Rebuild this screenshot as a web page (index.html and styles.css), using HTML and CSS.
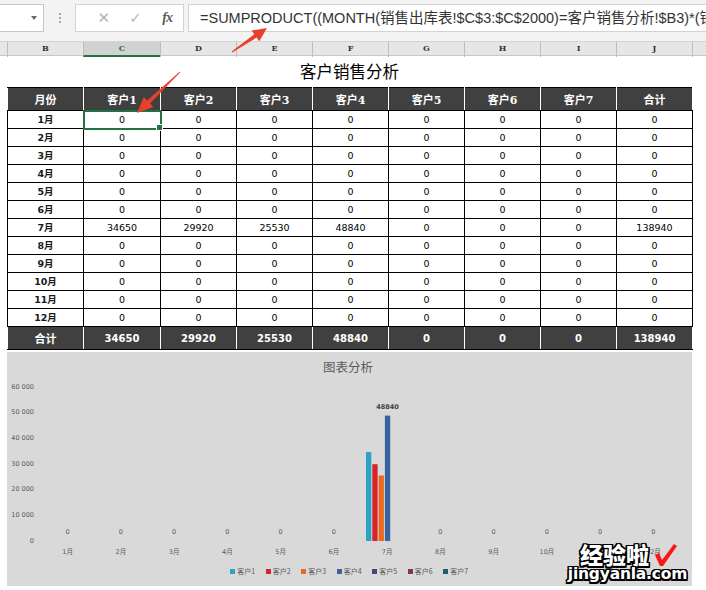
FILE: index.html
```html
<!DOCTYPE html>
<html lang="zh-CN">
<head>
<meta charset="utf-8">
<title>客户销售分析</title>
<link rel="stylesheet" href="styles.css">
</head>
<body>
<div class="toolbar">
  <div class="namebox"><span class="dd"></span></div>
  <div class="grip"><i></i><i></i><i></i></div>
  <div class="fbtns"><span class="btn x">✕</span><span class="btn ok">✓</span><span class="btn fx">fx</span></div>
  <div class="formula">=SUMPRODUCT((MONTH(销售出库表!$C$3:$C$2000)=客户销售分析!$B3)*(销售出库表!$D$3:$D$2000=C$2)*销售出库表!$F$3:$F$2000)</div>
</div>
<div class="colheads">
  <div class="corner"></div>
  <div class="ch">B</div>
  <div class="ch sel">C</div>
  <div class="ch">D</div>
  <div class="ch">E</div>
  <div class="ch">F</div>
  <div class="ch">G</div>
  <div class="ch">H</div>
  <div class="ch">I</div>
  <div class="ch">J</div>
  <div class="ch"></div>
</div>
<div class="sheet">
  <div class="title">客户销售分析</div>
  <table class="data">
    <colgroup>
      <col class="c1"><col class="c2"><col class="cn"><col class="cn"><col class="cn"><col class="cn"><col class="cn"><col class="cn"><col class="cn">
    </colgroup>
    <thead>
      <tr class="hd"><th>月份</th><th>客户1</th><th>客户2</th><th>客户3</th><th>客户4</th><th>客户5</th><th>客户6</th><th>客户7</th><th>合计</th></tr>
    </thead>
    <tbody>
      <tr><td class="m">1月</td><td class="active">0</td><td>0</td><td>0</td><td>0</td><td>0</td><td>0</td><td>0</td><td>0</td></tr>
      <tr><td class="m">2月</td><td>0</td><td>0</td><td>0</td><td>0</td><td>0</td><td>0</td><td>0</td><td>0</td></tr>
      <tr><td class="m">3月</td><td>0</td><td>0</td><td>0</td><td>0</td><td>0</td><td>0</td><td>0</td><td>0</td></tr>
      <tr><td class="m">4月</td><td>0</td><td>0</td><td>0</td><td>0</td><td>0</td><td>0</td><td>0</td><td>0</td></tr>
      <tr><td class="m">5月</td><td>0</td><td>0</td><td>0</td><td>0</td><td>0</td><td>0</td><td>0</td><td>0</td></tr>
      <tr><td class="m">6月</td><td>0</td><td>0</td><td>0</td><td>0</td><td>0</td><td>0</td><td>0</td><td>0</td></tr>
      <tr><td class="m">7月</td><td>34650</td><td>29920</td><td>25530</td><td>48840</td><td>0</td><td>0</td><td>0</td><td>138940</td></tr>
      <tr><td class="m">8月</td><td>0</td><td>0</td><td>0</td><td>0</td><td>0</td><td>0</td><td>0</td><td>0</td></tr>
      <tr><td class="m">9月</td><td>0</td><td>0</td><td>0</td><td>0</td><td>0</td><td>0</td><td>0</td><td>0</td></tr>
      <tr><td class="m">10月</td><td>0</td><td>0</td><td>0</td><td>0</td><td>0</td><td>0</td><td>0</td><td>0</td></tr>
      <tr><td class="m">11月</td><td>0</td><td>0</td><td>0</td><td>0</td><td>0</td><td>0</td><td>0</td><td>0</td></tr>
      <tr><td class="m">12月</td><td>0</td><td>0</td><td>0</td><td>0</td><td>0</td><td>0</td><td>0</td><td>0</td></tr>
    </tbody>
    <tfoot>
      <tr class="tot"><th>合计</th><th>34650</th><th>29920</th><th>25530</th><th>48840</th><th>0</th><th>0</th><th>0</th><th>138940</th></tr>
    </tfoot>
  </table>
  <div class="chart">
    <div class="ctitle">图表分析</div>
    <svg class="plot" width="685" height="180" viewBox="0 0 685 180">
      <g class="ylab">
        <text x="27" y="5">60 000</text>
        <text x="27" y="30.7">50 000</text>
        <text x="27" y="56.3">40 000</text>
        <text x="27" y="82">30 000</text>
        <text x="27" y="107.7">20 000</text>
        <text x="27" y="133.3">10 000</text>
        <text x="27" y="159">0</text>
      </g>
      <g class="dlab">
        <text x="60.6" y="150.7">0</text>
        <text x="113.9" y="150.7">0</text>
        <text x="167.1" y="150.7">0</text>
        <text x="220.4" y="150.7">0</text>
        <text x="273.6" y="150.7">0</text>
        <text x="326.9" y="150.7">0</text>
        <text x="433.4" y="150.7">0</text>
        <text x="486.6" y="150.7">0</text>
        <text x="539.9" y="150.7">0</text>
        <text x="593.1" y="150.7">0</text>
        <text x="646.4" y="150.7">0</text>
        <text class="big" x="380.5" y="25">48840</text>
      </g>
      <g class="xlab">
        <text x="60.6" y="170">1月</text>
        <text x="113.9" y="170">2月</text>
        <text x="167.1" y="170">3月</text>
        <text x="220.4" y="170">4月</text>
        <text x="273.6" y="170">5月</text>
        <text x="326.9" y="170">6月</text>
        <text x="380.1" y="170">7月</text>
        <text x="433.4" y="170">8月</text>
        <text x="486.6" y="170">9月</text>
        <text x="539.9" y="170">10月</text>
        <text x="593.1" y="170">11月</text>
        <text x="646.4" y="170">12月</text>
      </g>
      <rect class="s1" x="359" y="70.1" width="5.3" height="88.9"/>
      <rect class="s2" x="365.3" y="82.2" width="5.3" height="76.8"/>
      <rect class="s3" x="371.6" y="93.5" width="5.3" height="65.5"/>
      <rect class="s4" x="377.9" y="33.6" width="5.3" height="125.4"/>
    </svg>
    <div class="legend">
      <span class="li"><i class="sw s1"></i>客户1</span>
      <span class="li"><i class="sw s2"></i>客户2</span>
      <span class="li"><i class="sw s3"></i>客户3</span>
      <span class="li"><i class="sw s4"></i>客户4</span>
      <span class="li"><i class="sw s5"></i>客户5</span>
      <span class="li"><i class="sw s6"></i>客户6</span>
      <span class="li"><i class="sw s7"></i>客户7</span>
    </div>
    <div class="watermark">
      <div class="wm1">经验啦<svg class="check" width="26" height="25" viewBox="0 0 26 25"><path d="M3 13 L7 11 L10 18 L22 2 L25 4 L11 24 L8 24 Z"/></svg></div>
      <div class="wm2">jingyanla.com</div>
    </div>
  </div>
</div>
<svg class="arrows" width="706" height="590" viewBox="0 0 706 590">
  <polygon points="231.7,51.6 254.3,34.25 251.6,30.6 267,28 259.3,41.2 256.6,37.55 232.3,52.4"/>
  <polygon points="179.65,71.64 147.2,100.51 143.8,96.9 137,113 153.4,107 149.96,103.41 180.35,72.36"/>
</svg>
</body>
</html>
```
FILE: styles.css
```css
* { box-sizing: border-box; }
html, body { margin: 0; padding: 0; }
body {
  width: 706px;
  height: 590px;
  overflow: hidden;
  background: #ffffff;
  font-family: "Noto Sans CJK SC", "Liberation Sans", sans-serif;
  position: relative;
}

/* formula bar */
.toolbar {
  height: 41px;
  background: #f3f3f3;
  display: flex;
  align-items: flex-start;
  padding-top: 4px;
}
.namebox {
  width: 45px;
  height: 28px;
  margin-left: -1px;
  background: #fff;
  border: 1px solid #c6c6c6;
  position: relative;
  display: flex;
  align-items: center;
  justify-content: flex-end;
  padding-right: 6px;
}
.dd {
  width: 0; height: 0;
  border-left: 3.5px solid transparent;
  border-right: 3.5px solid transparent;
  border-top: 4px solid #6b6b6b;
}
.grip {
  width: 31px;
  height: 28px;
  display: flex;
  flex-direction: column;
  align-items: center;
  justify-content: center;
  gap: 2px;
}
.grip i { display: block; width: 2px; height: 2px; background: #a8a8a8; }
.fbtns {
  width: 109px;
  height: 28px;
  background: #fff;
  border: 1px solid #d2d2d2;
  display: flex;
  align-items: center;
  padding-left: 12px;
}
.btn { width: 35px; text-align: center; color: #b4b4b4; }
.btn.x { font-size: 15px; font-family: "DejaVu Sans", sans-serif; }
.btn.ok { font-size: 15px; font-family: "DejaVu Sans", sans-serif; color: #b8b8b8; }
.btn.fx { font-family: "Liberation Serif", serif; font-style: italic; font-weight: bold; font-size: 14px; color: #5a5a5a; letter-spacing: -1px; }
.formula {
  margin-left: 4px;
  flex: 1;
  min-width: 0;
  height: 28px;
  background: #fff;
  border: 1px solid #d2d2d2;
  border-right: none;
  white-space: nowrap;
  overflow: hidden;
  padding-left: 11px;
  font-family: "Liberation Sans", "Noto Sans CJK SC", sans-serif;
  font-size: 14.5px;
  line-height: 26px;
  color: #333;
}

/* column headers */
.colheads {
  display: grid;
  grid-template-columns: 7px 76px 77px 76px 76px 76px 76px 76px 76px 76px 1fr;
  height: 15px;
  background: #e6e6e6;
  border-top: 1px solid #d4d4d4;
  border-bottom: 1px solid #c8c8c8;
}
.ch {
  border-left: 1px solid #bdbdbd;
  font-family: "DejaVu Serif", serif;
  font-size: 8px;
  font-weight: bold;
  color: #333;
  text-align: center;
  line-height: 13px;
}
.ch.sel {
  background: #d2d2d2;
  border-bottom: 2px solid #217346;
  color: #217346;
}

/* sheet */
.sheet { padding-left: 7px; }
.title {
  width: 685px;
  height: 31px;
  display: flex;
  align-items: center;
  justify-content: center;
  font-size: 16.5px;
  color: #000;
  padding-bottom: 1px;
}
table.data {
  border-collapse: collapse;
  table-layout: fixed;
  width: 686px;
  border: 1px solid #000;
}
col.c1 { width: 76px; }
col.c2 { width: 77px; }
col.cn { width: 76px; }
table.data th, table.data td {
  padding: 0;
  text-align: center;
  white-space: nowrap;
  overflow: visible;
}
tr.hd { height: 23px; }
tr.hd th {
  background: #404040;
  color: #fff;
  font-weight: bold;
  font-size: 11px;
  border-left: 1px solid #fff;
  border-right: 1px solid #fff;
  border-top: 1px solid #000;
  border-bottom: 1px solid #000;
  font-family: "DejaVu Serif", "Noto Sans CJK SC", serif;
}
tbody tr { height: 18px; }
tbody td {
  border: 1px solid #000;
  font-family: "DejaVu Sans", "Noto Sans CJK SC", sans-serif;
  font-size: 9.5px;
  color: #000;
  line-height: 16px;
}
tbody td.m { font-weight: bold; font-size: 9.5px; color: #1a1a1a; }
td.active {
  position: relative;
  outline: 2px solid #217346;
  outline-offset: -1px;
}
td.active::after {
  content: "";
  position: absolute;
  right: -3px;
  bottom: -3px;
  width: 5px;
  height: 5px;
  background: #217346;
  border: 1px solid #fff;
}
tr.tot { height: 23px; }
tr.tot th {
  background: #404040;
  color: #fff;
  font-family: "DejaVu Sans", "Noto Sans CJK SC", sans-serif;
  font-weight: bold;
  font-size: 10px;
  border-left: 1px solid #fff;
  border-right: 1px solid #fff;
  border-top: 1px solid #000;
  border-bottom: 1px solid #000;
}
tr.tot th:first-child { font-size: 11px; }

/* chart */
.chart {
  margin-top: 2px;
  width: 685px;
  height: 234px;
  background: #d9d9d9;
  position: relative;
}
.ctitle {
  height: 30px;
  line-height: 30px;
  text-align: center;
  font-size: 12.5px;
  color: #595959;
  padding-right: 3px;
}
.plot { display: block; }
.plot text {
  font-family: "DejaVu Sans", "Noto Sans CJK SC", sans-serif;
  font-size: 6.5px;
  fill: #595959;
  dominant-baseline: middle;
}
.ylab text { text-anchor: end; }
.dlab text, .xlab text { text-anchor: middle; }
.dlab text.big { font-weight: bold; fill: #404040; }
.s1 { fill: #2ca3c4; background: #2ca3c4; }
.s2 { fill: #d9232b; background: #d9232b; }
.s3 { fill: #eb6a1e; background: #eb6a1e; }
.s4 { fill: #38649f; background: #38649f; }
.s5 { background: #3e4a7e; }
.s6 { background: #7b3a4c; }
.s7 { background: #1f5f6d; }
.legend {
  height: 18px;
  display: flex;
  align-items: center;
  justify-content: center;
  padding-left: 10px;
}
.li {
  width: 35.5px;
  display: flex;
  align-items: center;
  gap: 2px;
  font-size: 7px;
  color: #595959;
  white-space: nowrap;
}
.sw { display: block; width: 5px; height: 5px; }

/* watermark */
.watermark {
  position: absolute;
  right: 2px;
  bottom: 4px;
  width: 125px;
  color: #fff;
  font-weight: bold;
  line-height: 1;
  text-shadow:
    -1.5px -1.5px 0 #000, 1.5px -1.5px 0 #000, -1.5px 1.5px 0 #000, 1.5px 1.5px 0 #000,
    0 -1.5px 0 #000, 0 1.5px 0 #000, -1.5px 0 0 #000, 1.5px 0 0 #000;
}
.wm1 {
  display: flex;
  align-items: center;
  font-size: 23px;
  font-weight: 900;
  padding-left: 15px;
  white-space: nowrap;
  height: 26px;
}
.check {
  display: block;
  margin-left: 3px;
  fill: #ff1414;
}
.wm2 {
  text-align: center;
  font-family: "DejaVu Sans", sans-serif;
  font-size: 15.5px;
  letter-spacing: -0.2px;
  margin-top: -1px;
}

/* arrows */
.arrows {
  position: absolute;
  left: 0;
  top: 0;
  pointer-events: none;
}
.arrows polygon { fill: #e8402c; }
```
